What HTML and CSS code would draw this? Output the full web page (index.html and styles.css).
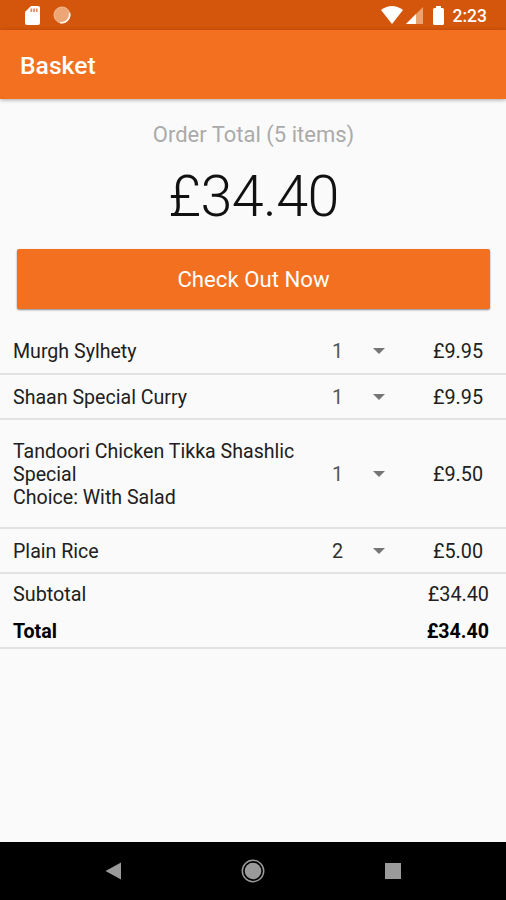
FILE: index.html
```html
<!DOCTYPE html>
<html lang="en">
<head>
<meta charset="utf-8">
<title>Basket</title>
<link rel="stylesheet" href="styles.css">
</head>
<body>
<div class="status">
  <svg class="sd" width="15" height="19" viewBox="0 0 15 19"><path fill="#fff" d="M6 0h7q2 0 2 2v15q0 2-2 2H2q-2 0-2-2V6z"/><path fill="#e08a56" d="M5.500 2.500h1.700v3.500H5.500zM8.200 2.500h1.700v3.500H8.200zM10.900 2.500h1.700v3.500h-1.700z"/></svg>
  <svg class="sync" width="18" height="18" viewBox="0 0 18 18"><circle cx="9" cy="9" r="8" fill="#eda777" stroke="#f1b892" stroke-width="1"/><path d="M16.500 7A8 8 0 0 1 7 16.500" fill="none" stroke="#fff3ea" stroke-width="1.600"/></svg>
  <svg class="wifi" width="22" height="18" viewBox="0 0 22 18"><path fill="#fff" d="M0 4Q11-4 22 4L11 18z"/></svg>
  <svg class="signal" width="17" height="17" viewBox="0 0 17 17"><path fill="#eda272" d="M17 0v17H0z"/><path fill="#fff" d="M10 7v10H0z"/></svg>
  <svg class="battery" width="11" height="19" viewBox="0 0 11 19"><path fill="#fff" d="M3 0h5v2h1.500q1.500 0 1.500 1.500v14q0 1.500-1.500 1.500h-8Q0 19 0 17.500v-14Q0 2 1.500 2H3z"/></svg>
  <span class="clock">2:23</span>
</div>
<header class="bar">Basket</header>
<main>
  <div class="label">Order Total (5 items)</div>
  <div class="amount">£34.40</div>
  <button class="checkout">Check Out Now</button>
  <div class="items">
    <div class="row first"><span class="name">Murgh Sylhety</span><span class="qty">1</span><i class="arrow"></i><span class="price">£9.95</span></div>
    <div class="row"><span class="name">Shaan Special Curry</span><span class="qty">1</span><i class="arrow"></i><span class="price">£9.95</span></div>
    <div class="row tall"><span class="name">Tandoori Chicken Tikka Shashlic Special<br>Choice: With Salad</span><span class="qty">1</span><i class="arrow"></i><span class="price">£9.50</span></div>
    <div class="row"><span class="name">Plain Rice</span><span class="qty two">2</span><i class="arrow"></i><span class="price">£5.00</span></div>
  </div>
  <div class="sums">
    <div class="sum"><span>Subtotal</span><span>£34.40</span></div>
    <div class="sum total"><span>Total</span><span>£34.40</span></div>
  </div>
</main>
<nav class="nav">
  <svg width="20" height="20" viewBox="0 0 20 20"><path fill="#9a9a9a" d="M2.500 10L18 1.500v17z"/></svg>
  <svg width="24" height="24" viewBox="0 0 24 24"><circle cx="12" cy="12" r="10.700" fill="none" stroke="#9a9a9a" stroke-width="1.500"/><circle cx="12" cy="12" r="8.300" fill="#9a9a9a"/></svg>
  <svg width="20" height="20" viewBox="0 0 20 20"><path fill="#9a9a9a" d="M2 2h16v16H2z"/></svg>
</nav>
</body>
</html>
```
FILE: styles.css
```css
* { box-sizing: border-box; }
body { margin: 0; height: 900px; display: flex; flex-direction: column; background: #fafafa; color: #202020; font-family: Roboto, sans-serif; font-size: 19.8px; overflow: hidden; }
.status { height: 30px; flex: none; background: #d4560c; display: flex; align-items: center; padding: 0 19px 0 25px; color: #fff; }
.sync { margin-left: 13px; }
.wifi { margin-left: auto; }
.signal { margin-left: 3px; }
.battery { margin-left: 10px; }
.clock { margin-left: 9px; font-size: 17.5px; font-weight: 500; line-height: 30px; padding-top: 2px; }
.bar { height: 69px; flex: none; background: #f37021; color: #fff; font-size: 24.7px; font-weight: 500; line-height: 71px; padding-left: 20px; box-shadow: 0 1px 4px #0005; }
main { flex: 1; }
.label { margin-top: 22px; padding-left: 1px; text-align: center; color: #aaa; font-size: 22px; line-height: 28px; }
.amount { padding-left: 1px; text-align: center; font-size: 57.5px; font-weight: 300; line-height: 70px; margin-top: 13px; color: #111; letter-spacing: -0.6px; }
.checkout { display: block; width: 473px; height: 60px; margin: 17px 0 0 17px; border: 0; border-radius: 2px; background: #f37021; color: #fff; font: 22.2px Roboto, sans-serif; box-shadow: 0 1px 2px #0007; }
.items { margin-top: 20px; }
.row { height: 45px; display: grid; grid-template-columns: 319px 34px 40px 1fr; align-items: center; padding: 2px 0 0 13px; border-bottom: 2px solid #e2e2e2; line-height: 23px; }
.first { height: 46px; padding-top: 1px; }
.tall { height: 109px; }
.name { padding-right: 12px; font-size: 19.6px; }
.qty { color: #555; }
.two { color: #303030; }
.arrow { width: 0; border: 6px solid transparent; border-top-color: #757575; border-bottom: 0; margin: -1px 0 0 7px; }
.price { padding-left: 27px; }
.sums { height: 75px; border-bottom: 2px solid #e2e2e2; }
.sum { display: flex; justify-content: space-between; height: 37px; line-height: 42px; padding: 0 17px 0 13px; }
.total { font-weight: 700; color: #000; font-size: 19.6px; }
.nav { height: 58px; flex: none; background: #000; display: flex; align-items: center; justify-content: space-between; padding: 0 103px; }
```
